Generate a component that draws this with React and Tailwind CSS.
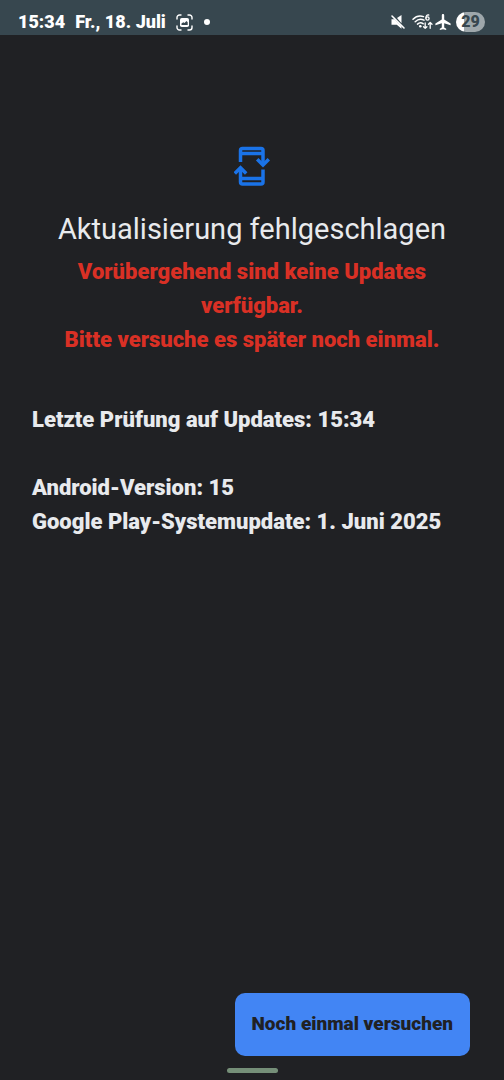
function StatusBar() {
  return (
    <header className="flex h-[35px] shrink-0 items-center justify-between bg-[#37474f] pt-[9px] pr-[19px] pl-[18px] text-white">
      <div className="flex items-center">
        <time className="text-[18px] leading-5 font-black">15:34</time>
        <span className="ml-[10px] text-[18px] leading-5 font-black">Fr., 18. Juli</span>
        <svg className="ml-2.5 size-[17px]" viewBox="0 0 17 17" fill="none" stroke="currentColor" strokeWidth="1.4" strokeLinecap="round" aria-hidden="true">
          <path d="M1 5V3.500A2.500 2.500 0 0 1 3.500 1H5M12 1h1.500A2.500 2.500 0 0 1 16 3.500V5M16 12v1.500a2.500 2.500 0 0 1-2.500 2.500H12M5 16H3.500A2.500 2.500 0 0 1 1 13.500V12" />
          <rect x="4" y="4" width="9" height="9" rx="1.800" fill="currentColor" stroke="none" />
          <path d="M5.500 11V9.500L7.300 8.200l1.200.8L10.500 7l1.200 1.200V11z" fill="#37474f" stroke="none" />
        </svg>
        <span className="ml-[11px] size-[6px] rounded-full bg-white" />
      </div>
      <div className="flex items-center">
        <svg className="size-4" viewBox="0 0 16 16" fill="currentColor" aria-hidden="true">
          <path d="M1.500 5.300h3l7 7v2.500L6.800 10.800H1.500z" />
          <path d="M7 4 11.500 1v8.300z" />
          <path d="M2 2 14 14" stroke="currentColor" strokeWidth="1.600" strokeLinecap="round" />
        </svg>
        <svg className="ml-1.5 h-4 w-[21px]" viewBox="0 0 21 16" fill="none" stroke="currentColor" strokeLinecap="round" strokeLinejoin="round" aria-hidden="true">
          <path d="M1 5.200C4 2.200 8 1.400 11.500 2.600M3.200 7.700c2.600-2.500 6-3 8.800-1.500M5.500 10.100c1.700-1.600 3.900-1.700 5.600-.4" strokeWidth="1.500" />
          <circle cx="8.300" cy="12.200" r="1.300" fill="currentColor" stroke="none" />
          <path d="M16.700 1c-1.800-.4-2.800 1-2.800 3" strokeWidth="1.300" />
          <circle cx="15.500" cy="4.500" r="1.600" strokeWidth="1.300" />
          <path d="M13.200 9v5.300M11.500 12.700l1.700 1.700 1.700-1.700M18.200 14.300V8.500M16.400 10.200l1.800-1.800 1.800 1.800" strokeWidth="1.300" />
        </svg>
        <svg className="ml-0.5 size-4" viewBox="2 2 20 20" fill="currentColor" aria-hidden="true">
          <path d="M21.500 16v-2l-8-5V3.500c0-.83-.67-1.500-1.500-1.500s-1.500.67-1.500 1.500V9l-8 5v2l8-2.500V19l-2.500 1.500V22l4-1 4 1v-1.500L13.500 19v-5.500z" />
        </svg>
        <span className="ml-[5px] flex h-[20px] w-[29px] items-center justify-center rounded-full bg-linear-to-r from-white from-29% to-[#9ea7ab] to-29% text-[16px] leading-none font-black text-[#37474f]">
          29
        </span>
      </div>
    </header>
  );
}

function UpdateIcon() {
  return (
    <svg className="h-10 w-9" viewBox="0 0 36 40" fill="none" stroke="currentColor" strokeWidth="3.500" aria-hidden="true">
      <path d="M6.500 16V4.500a2 2 0 0 1 2-2h18.500a2 2 0 0 1 2 2V18M6.500 7.500H29" />
      <path d="M29 23.500V36a2 2 0 0 1-2 2H8.500a2 2 0 0 1-2-2V22M6.500 32.500H29" />
      <path d="m23.200 13.200 5.800 5.800 5.800-5.800M.8 27.500l5.700-5.700 5.700 5.700" />
    </svg>
  );
}

export default function App() {
  return (
    <div className="flex min-h-screen flex-col bg-[#202124] font-['Roboto',sans-serif] text-[#e8eaed]">
      <StatusBar />
      <main className="flex grow flex-col px-8 pt-[111px]">
        <section className="flex flex-col items-center text-center">
          <span className="text-[#1a73e8]">
            <UpdateIcon />
          </span>
          <h1 className="mt-[25px] text-[29px] leading-9 font-[450] whitespace-nowrap">
            Aktualisierung fehlgeschlagen
          </h1>
          <p className="mt-2 text-[22px] leading-[34px] font-black text-[#d93025]">
            Vorübergehend sind keine Updates
            <br />
            verfügbar.
            <br />
            Bitte versuche es später noch einmal.
          </p>
        </section>
        <section className="mt-[46px] text-[22px] leading-[34px] font-black">
          <p>Letzte Prüfung auf Updates: 15:34</p>
          <p className="mt-[34px]">Android-Version: 15</p>
          <p>Google Play-Systemupdate: 1. Juni 2025</p>
        </section>
      </main>
      <footer className="flex flex-col pb-[7px]">
        <button type="button" className="mr-[34px] h-[63px] self-end rounded-[10px] bg-[#4285f4] px-[17px] text-[19px] font-black text-[#202124]">
          Noch einmal versuchen
        </button>
        <span className="mt-3 h-[5px] w-[51px] self-center rounded-full bg-[#758f78]" />
      </footer>
    </div>
  );
}
